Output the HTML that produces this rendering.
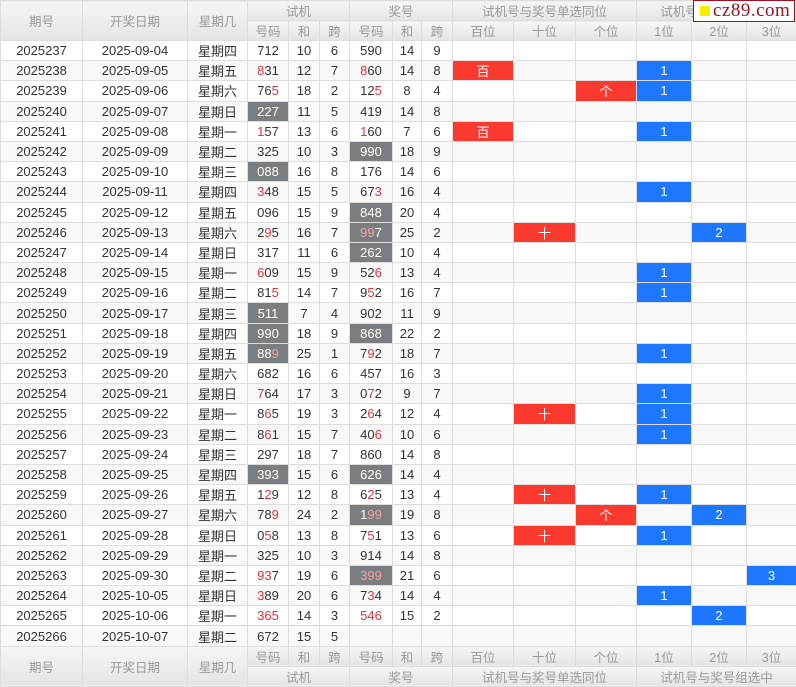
<!DOCTYPE html>
<html><head><meta charset="utf-8"><style>
body{margin:0;background:#fff;font-family:"Liberation Sans","Noto Sans CJK SC",sans-serif;}
table{border-collapse:collapse;table-layout:fixed;width:796px;font-size:13px;color:#333;}
td,th{border:1px solid #ddd;text-align:center;padding:0;white-space:nowrap;overflow:hidden;}
th{background:linear-gradient(#f6f6f6,#e4e4e4);color:#999;font-weight:normal;height:19px;font-size:12.5px;}
tbody tr{height:20.2px;}
tbody tr:nth-child(even){background:#f8f8f8;}
td.k{border-left:1px solid #000;}
.r{color:#e8313a;}
td.g{background:#7b7e81;color:#fff;}
td.g .r{color:#f7a0a0;}
td.B{background:#1e78ff;color:#fff;}
td.R{background:#fa3a2e;color:#fff;}
.logo{position:absolute;left:693px;top:0;width:100px;height:20px;background:#fff;border:1px solid #a01020;font-family:"Liberation Serif",serif;font-size:19px;color:#a01020;line-height:20px;letter-spacing:0.5px;}
.logo i{display:inline-block;width:10px;height:10px;background:#ffee00;margin:0 3px 0 6px;vertical-align:0px;}
</style></head><body>
<div class="logo"><i></i>cz89.com</div>
<table>
<colgroup><col style="width:82px"><col style="width:105px"><col style="width:60px"><col style="width:41px"><col style="width:31px"><col style="width:30px"><col style="width:43px"><col style="width:29px"><col style="width:31px"><col style="width:61px"><col style="width:62px"><col style="width:61px"><col style="width:55px"><col style="width:55px"><col style="width:50px"></colgroup>
<thead>
<tr><th rowspan="2">期号</th><th rowspan="2">开奖日期</th><th rowspan="2">星期几</th><th colspan="3">试机</th><th colspan="3">奖号</th><th colspan="3">试机号与奖号单选同位</th><th colspan="3">试机号与奖号组选中</th></tr>
<tr><th>号码</th><th>和</th><th>跨</th><th>号码</th><th>和</th><th>跨</th><th>百位</th><th>十位</th><th>个位</th><th>1位</th><th>2位</th><th>3位</th></tr>
</thead>
<tbody>
<tr><td>2025237</td><td>2025-09-04</td><td>星期四</td><td>712</td><td>10</td><td>6</td><td class="k">590</td><td>14</td><td>9</td><td class="k"></td><td></td><td></td><td class="k"></td><td></td><td></td></tr>
<tr><td>2025238</td><td>2025-09-05</td><td>星期五</td><td><span class="r">8</span>31</td><td>12</td><td>7</td><td class="k"><span class="r">8</span>60</td><td>14</td><td>8</td><td class="k R">百</td><td></td><td></td><td class="k B">1</td><td></td><td></td></tr>
<tr><td>2025239</td><td>2025-09-06</td><td>星期六</td><td>76<span class="r">5</span></td><td>18</td><td>2</td><td class="k">12<span class="r">5</span></td><td>8</td><td>4</td><td class="k"></td><td></td><td class="R">个</td><td class="k B">1</td><td></td><td></td></tr>
<tr><td>2025240</td><td>2025-09-07</td><td>星期日</td><td class="g">227</td><td>11</td><td>5</td><td class="k">419</td><td>14</td><td>8</td><td class="k"></td><td></td><td></td><td class="k"></td><td></td><td></td></tr>
<tr><td>2025241</td><td>2025-09-08</td><td>星期一</td><td><span class="r">1</span>57</td><td>13</td><td>6</td><td class="k"><span class="r">1</span>60</td><td>7</td><td>6</td><td class="k R">百</td><td></td><td></td><td class="k B">1</td><td></td><td></td></tr>
<tr><td>2025242</td><td>2025-09-09</td><td>星期二</td><td>325</td><td>10</td><td>3</td><td class="k g">990</td><td>18</td><td>9</td><td class="k"></td><td></td><td></td><td class="k"></td><td></td><td></td></tr>
<tr><td>2025243</td><td>2025-09-10</td><td>星期三</td><td class="g">088</td><td>16</td><td>8</td><td class="k">176</td><td>14</td><td>6</td><td class="k"></td><td></td><td></td><td class="k"></td><td></td><td></td></tr>
<tr><td>2025244</td><td>2025-09-11</td><td>星期四</td><td><span class="r">3</span>48</td><td>15</td><td>5</td><td class="k">67<span class="r">3</span></td><td>16</td><td>4</td><td class="k"></td><td></td><td></td><td class="k B">1</td><td></td><td></td></tr>
<tr><td>2025245</td><td>2025-09-12</td><td>星期五</td><td>096</td><td>15</td><td>9</td><td class="k g">848</td><td>20</td><td>4</td><td class="k"></td><td></td><td></td><td class="k"></td><td></td><td></td></tr>
<tr><td>2025246</td><td>2025-09-13</td><td>星期六</td><td>2<span class="r">9</span>5</td><td>16</td><td>7</td><td class="k g"><span class="r">99</span>7</td><td>25</td><td>2</td><td class="k"></td><td class="R">十</td><td></td><td class="k"></td><td class="B">2</td><td></td></tr>
<tr><td>2025247</td><td>2025-09-14</td><td>星期日</td><td>317</td><td>11</td><td>6</td><td class="k g">262</td><td>10</td><td>4</td><td class="k"></td><td></td><td></td><td class="k"></td><td></td><td></td></tr>
<tr><td>2025248</td><td>2025-09-15</td><td>星期一</td><td><span class="r">6</span>09</td><td>15</td><td>9</td><td class="k">52<span class="r">6</span></td><td>13</td><td>4</td><td class="k"></td><td></td><td></td><td class="k B">1</td><td></td><td></td></tr>
<tr><td>2025249</td><td>2025-09-16</td><td>星期二</td><td>81<span class="r">5</span></td><td>14</td><td>7</td><td class="k">9<span class="r">5</span>2</td><td>16</td><td>7</td><td class="k"></td><td></td><td></td><td class="k B">1</td><td></td><td></td></tr>
<tr><td>2025250</td><td>2025-09-17</td><td>星期三</td><td class="g">511</td><td>7</td><td>4</td><td class="k">902</td><td>11</td><td>9</td><td class="k"></td><td></td><td></td><td class="k"></td><td></td><td></td></tr>
<tr><td>2025251</td><td>2025-09-18</td><td>星期四</td><td class="g">990</td><td>18</td><td>9</td><td class="k g">868</td><td>22</td><td>2</td><td class="k"></td><td></td><td></td><td class="k"></td><td></td><td></td></tr>
<tr><td>2025252</td><td>2025-09-19</td><td>星期五</td><td class="g">88<span class="r">9</span></td><td>25</td><td>1</td><td class="k">7<span class="r">9</span>2</td><td>18</td><td>7</td><td class="k"></td><td></td><td></td><td class="k B">1</td><td></td><td></td></tr>
<tr><td>2025253</td><td>2025-09-20</td><td>星期六</td><td>682</td><td>16</td><td>6</td><td class="k">457</td><td>16</td><td>3</td><td class="k"></td><td></td><td></td><td class="k"></td><td></td><td></td></tr>
<tr><td>2025254</td><td>2025-09-21</td><td>星期日</td><td><span class="r">7</span>64</td><td>17</td><td>3</td><td class="k">0<span class="r">7</span>2</td><td>9</td><td>7</td><td class="k"></td><td></td><td></td><td class="k B">1</td><td></td><td></td></tr>
<tr><td>2025255</td><td>2025-09-22</td><td>星期一</td><td>8<span class="r">6</span>5</td><td>19</td><td>3</td><td class="k">2<span class="r">6</span>4</td><td>12</td><td>4</td><td class="k"></td><td class="R">十</td><td></td><td class="k B">1</td><td></td><td></td></tr>
<tr><td>2025256</td><td>2025-09-23</td><td>星期二</td><td>8<span class="r">6</span>1</td><td>15</td><td>7</td><td class="k">40<span class="r">6</span></td><td>10</td><td>6</td><td class="k"></td><td></td><td></td><td class="k B">1</td><td></td><td></td></tr>
<tr><td>2025257</td><td>2025-09-24</td><td>星期三</td><td>297</td><td>18</td><td>7</td><td class="k">860</td><td>14</td><td>8</td><td class="k"></td><td></td><td></td><td class="k"></td><td></td><td></td></tr>
<tr><td>2025258</td><td>2025-09-25</td><td>星期四</td><td class="g">393</td><td>15</td><td>6</td><td class="k g">626</td><td>14</td><td>4</td><td class="k"></td><td></td><td></td><td class="k"></td><td></td><td></td></tr>
<tr><td>2025259</td><td>2025-09-26</td><td>星期五</td><td>1<span class="r">2</span>9</td><td>12</td><td>8</td><td class="k">6<span class="r">2</span>5</td><td>13</td><td>4</td><td class="k"></td><td class="R">十</td><td></td><td class="k B">1</td><td></td><td></td></tr>
<tr><td>2025260</td><td>2025-09-27</td><td>星期六</td><td>78<span class="r">9</span></td><td>24</td><td>2</td><td class="k g">1<span class="r">99</span></td><td>19</td><td>8</td><td class="k"></td><td></td><td class="R">个</td><td class="k"></td><td class="B">2</td><td></td></tr>
<tr><td>2025261</td><td>2025-09-28</td><td>星期日</td><td>0<span class="r">5</span>8</td><td>13</td><td>8</td><td class="k">7<span class="r">5</span>1</td><td>13</td><td>6</td><td class="k"></td><td class="R">十</td><td></td><td class="k B">1</td><td></td><td></td></tr>
<tr><td>2025262</td><td>2025-09-29</td><td>星期一</td><td>325</td><td>10</td><td>3</td><td class="k">914</td><td>14</td><td>8</td><td class="k"></td><td></td><td></td><td class="k"></td><td></td><td></td></tr>
<tr><td>2025263</td><td>2025-09-30</td><td>星期二</td><td><span class="r">93</span>7</td><td>19</td><td>6</td><td class="k g"><span class="r">399</span></td><td>21</td><td>6</td><td class="k"></td><td></td><td></td><td class="k"></td><td></td><td class="B">3</td></tr>
<tr><td>2025264</td><td>2025-10-05</td><td>星期日</td><td><span class="r">3</span>89</td><td>20</td><td>6</td><td class="k">7<span class="r">3</span>4</td><td>14</td><td>4</td><td class="k"></td><td></td><td></td><td class="k B">1</td><td></td><td></td></tr>
<tr><td>2025265</td><td>2025-10-06</td><td>星期一</td><td><span class="r">365</span></td><td>14</td><td>3</td><td class="k"><span class="r">546</span></td><td>15</td><td>2</td><td class="k"></td><td></td><td></td><td class="k"></td><td class="B">2</td><td></td></tr>
<tr><td>2025266</td><td>2025-10-07</td><td>星期二</td><td>672</td><td>15</td><td>5</td><td class="k"></td><td></td><td></td><td class="k"></td><td></td><td></td><td class="k"></td><td></td><td></td></tr>
</tbody>
<tfoot>
<tr><th rowspan="2">期号</th><th rowspan="2">开奖日期</th><th rowspan="2">星期几</th><th>号码</th><th>和</th><th>跨</th><th>号码</th><th>和</th><th>跨</th><th>百位</th><th>十位</th><th>个位</th><th>1位</th><th>2位</th><th>3位</th></tr>
<tr><th colspan="3">试机</th><th colspan="3">奖号</th><th colspan="3">试机号与奖号单选同位</th><th colspan="3">试机号与奖号组选中</th></tr>
</tfoot>
</table>
</body></html>
